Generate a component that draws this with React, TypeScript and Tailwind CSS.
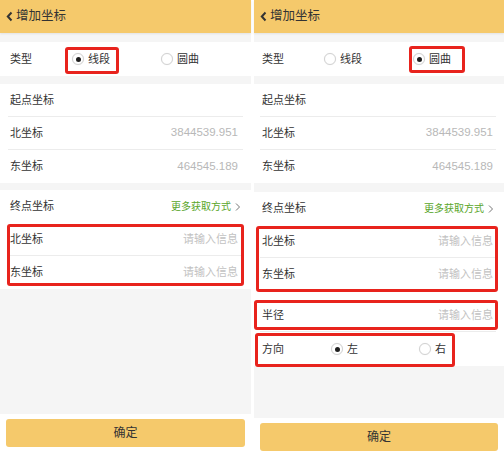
import React from "react";

type Mode = "line" | "arc";

const Radio = ({ label, checked }: { label: string; checked?: boolean }) => (
  <div className="flex items-center">
    <span className="w-[12px] h-[12px] rounded-full border border-[#d2d2d2] bg-white flex items-center justify-center shadow-[0_0_1px_rgba(0,0,0,0.1)]">
      {checked && <span className="w-[5px] h-[5px] rounded-full bg-[#1f1f1f]" />}
    </span>
    <span className="ml-[4px] text-[11px] text-[#333]">{label}</span>
  </div>
);

const Row = ({
  label,
  value,
  placeholder,
  divider = true,
  tight,
  children,
}: {
  label: string;
  value?: string;
  placeholder?: string;
  divider?: boolean;
  tight?: boolean;
  children?: React.ReactNode;
}) => (
  <div className={`bg-white ${tight ? "pl-[6px] pr-[8px]" : "px-[8px]"}`}>
    <div
      className={`h-[33px] flex items-center justify-between pl-[2px] ${tight ? "pr-[3px]" : "pr-[5px]"} ${
        divider ? "border-b border-[#ececec]" : ""
      }`}
    >
      <span className="text-[11px] text-[#333]">{label}</span>
      {value && <span className="text-[11.5px] text-[#b8b8b8]">{value}</span>}
      {placeholder && <span className="text-[11px] text-[#c2c2c2]">{placeholder}</span>}
      {children}
    </div>
  </div>
);

const Mark = ({ className }: { className: string }) => (
  <div className={`absolute border-[3px] border-[#e8231d] rounded-[3px] pointer-events-none ${className}`} />
);

const Panel = ({ mode }: { mode: Mode }) => {
  const arc = mode === "arc";
  return (
    <div className={`flex flex-col h-[456px] bg-[#f5f5f5] ${arc ? "w-[250px]" : "w-[251px]"}`}>
      <div className="h-[33px] bg-[#f5c96b] flex items-center px-[6px] shadow-[0_1px_2px_rgba(0,0,0,0.08)]">
        <svg width="7" height="11" viewBox="0 0 7 11" className="mr-[3px]">
          <polyline points="5.5,1.5 1.8,5.5 5.5,9.5" fill="none" stroke="#333" strokeWidth="2" />
        </svg>
        <span className="text-[12.5px] text-[#333]">增加坐标</span>
      </div>

      <div className="h-[9px]" />
      <div className={`relative bg-white h-[34px] flex items-center ${arc ? "pl-[8px]" : "pl-[10px]"}`}>
        <span className="w-[62px] text-[11px] text-[#333]">类型</span>
        <div className="w-[89px]">
          <Radio label="线段" checked={!arc} />
        </div>
        <Radio label="圆曲" checked={arc} />
        {arc ? <Mark className="left-[155px] w-[56px] top-[4px] h-[27px]" /> : <Mark className="left-[65px] w-[54px] top-[5px] h-[27px]" />}
      </div>

      <div className="h-[8px]" />
      <Row label="起点坐标" tight={arc} />
      <Row label="北坐标" value="3844539.951" tight={arc} />
      <Row label="东坐标" value="464545.189" divider={false} tight={arc} />

      <div className={arc ? "h-[9px]" : "h-[7px]"} />
      <div className={`bg-white ${arc ? "pl-[6px] pr-[8px]" : "px-[8px]"}`}>
        <div className="h-[33px] flex items-center justify-between pl-[2px] pr-[1px]">
          <span className="text-[11px] text-[#333]">终点坐标</span>
          <span className="flex items-center text-[10px] text-[#5aa52a]">
            更多获取方式
            <svg width="8" height="10" viewBox="0 0 8 10" className="ml-[3px]">
              <polyline points="2,1.5 5.5,5 2,8.5" fill="none" stroke="#777" strokeWidth="1" />
            </svg>
          </span>
        </div>
      </div>
      <div className="relative">
        <Row label="北坐标" placeholder="请输入信息" tight={arc} />
        <Row label="东坐标" placeholder="请输入信息" divider={arc} tight={arc} />
        <Mark className={arc ? "left-[2px] right-[6px] top-[1px] bottom-[-1px]" : "left-[7px] right-[7px] top-[1px] bottom-[3px]"} />
      </div>

      {arc && (
        <>
          <div className="h-[8px] bg-white" />
          <div className="relative">
            <Row label="半径" placeholder="请输入信息" tight />
            <Mark className="left-[0px] right-[6px] top-[1px] bottom-[2px]" />
          </div>
          <div className="relative bg-white h-[34px] flex items-center pl-[8px]">
            <span className="w-[69px] text-[11px] text-[#333]">方向</span>
            <div className="w-[88px]">
              <Radio label="左" checked />
            </div>
            <Radio label="右" />
            <Mark className="left-[1px] w-[200px] top-[1px] bottom-[-1px]" />
          </div>
        </>
      )}

      <div className="flex-1" />
      <div className={`bg-white px-[6px] pt-[5px] ${arc ? "h-[38px]" : "h-[42px]"}`}>
        <div className="h-[28px] rounded-[3px] bg-[#f5c96b] flex items-center justify-center text-[12px] text-[#333]">
          确定
        </div>
      </div>
    </div>
  );
};

export default function App() {
  return (
    <div className="w-[504px] h-[456px] bg-white flex font-['Liberation_Sans','Noto_Sans_CJK_SC',sans-serif] overflow-hidden">
      <Panel mode="line" />
      <div className="w-[3px]" />
      <Panel mode="arc" />
    </div>
  );
}
